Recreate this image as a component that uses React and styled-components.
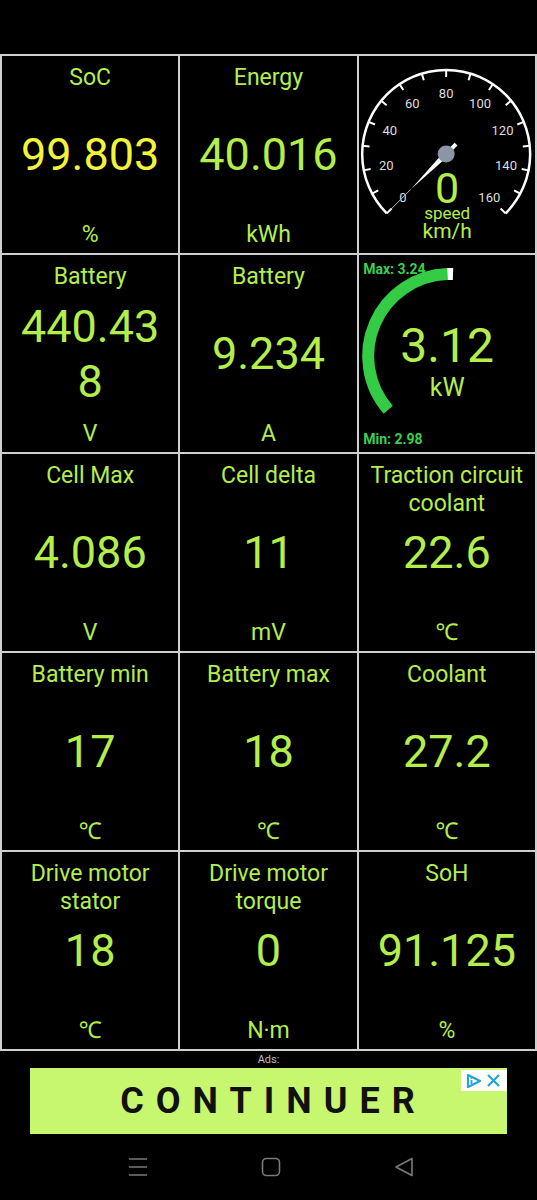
import React from 'react'
import styled, { createGlobalStyle } from 'styled-components'

const GREEN = '#b4ee4a'
const YELLOW = '#f3f33a'
const GAUGE = '#33cc44'

const GlobalStyle = createGlobalStyle`
  body {
    margin: 0;
    background: #000;
    font-family: Roboto, 'Noto Sans', sans-serif;
  }
`

const Page = styled.div`
  width: 537px;
  height: 1200px;
  display: flex;
  flex-direction: column;
  background: #000;
  overflow: hidden;
`
const StatusBar = styled.div`
  height: 54px;
  flex-shrink: 0;
`
const Grid = styled.div`
  display: grid;
  grid-template-columns: repeat(3, 1fr);
  grid-auto-rows: 197px;
  gap: 2px;
  padding: 2px;
  background: #cfcfcf;
`
const Cell = styled.div`
  background: #000;
  display: grid;
  grid-template-areas: 'c';
  min-width: 0;
  overflow: hidden;
  color: ${GREEN};
  text-align: center;
  & > * {
    grid-area: c;
  }
`
const Label = styled.div`
  align-self: start;
  padding: 8px 8px 0;
  font-size: 23px;
  line-height: 28px;
`
const Value = styled.div`
  align-self: center;
  padding: 0 8px;
  font-size: 45px;
  line-height: 55px;
  word-break: break-all;
  color: ${p => p.$color || GREEN};
`
const Unit = styled.div`
  align-self: end;
  padding: 0 8px 4px;
  font-size: 23px;
  line-height: 28px;
`
const GaugeSvg = styled.svg`
  width: 100%;
  height: 100%;
  display: block;
  font-family: Roboto, sans-serif;
`
const AdLabel = styled.div`
  height: 17px;
  line-height: 17px;
  text-align: center;
  font-size: 11px;
  color: #bdbdbd;
`
const Banner = styled.div`
  position: relative;
  margin: 0 30px;
  height: 66px;
  background: #c6f76e;
  display: flex;
  align-items: center;
  justify-content: center;
`
const BannerText = styled.span`
  font-size: 36px;
  font-weight: 700;
  letter-spacing: 12px;
  padding-left: 10px;
  color: #111;
`
const AdChoices = styled.div`
  position: absolute;
  top: 2px;
  right: 0;
  width: 46px;
  height: 21px;
  background: #fff;
  display: flex;
  align-items: center;
  justify-content: center;
`
const NavBar = styled.nav`
  flex: 1;
  display: flex;
  align-items: center;
  justify-content: center;
  gap: 113px;
  padding-left: 4px;
`
const NavIcon = styled.svg`
  width: 20px;
  height: 20px;
  stroke: #7a7a7a;
  fill: none;
  stroke-width: 1.6;
`

const polar = (cx, cy, r, deg) => {
  const a = (deg * Math.PI) / 180
  return [cx + r * Math.cos(a), cy - r * Math.sin(a)]
}

const SpeedGauge = () => {
  const cx = 87
  const cy = 98
  const r = 84
  const ang = v => 225 - (v / 160) * 270
  const [sx, sy] = polar(cx, cy, r, 225)
  const [ex, ey] = polar(cx, cy, r, -45)
  const ticks = []
  for (let v = 0; v <= 160; v += 10) ticks.push(v)
  const nums = [0, 20, 40, 60, 80, 100, 120, 140, 160]
  const a0 = ang(0)
  const perp = a0 + 90
  const [tx, ty] = polar(cx, cy, 50, a0)
  const [lx, ly] = polar(cx, cy, 79, a0)
  const [b1x, b1y] = polar(cx, cy, 3, perp)
  const [b2x, b2y] = polar(cx, cy, -3, perp)
  const [t1x, t1y] = polar(cx, cy, 14, a0 + 180)
  const [w1x, w1y] = polar(t1x, t1y, 2, perp)
  const [w2x, w2y] = polar(t1x, t1y, -2, perp)
  const [c1x, c1y] = polar(cx, cy, 2, perp)
  const [c2x, c2y] = polar(cx, cy, -2, perp)
  return (
    <GaugeSvg viewBox="0 0 176 197">
      <path
        d={`M${sx} ${sy} A${r} ${r} 0 1 1 ${ex} ${ey}`}
        stroke="#fff"
        strokeWidth="2.5"
        fill="none"
      />
      {ticks.map(v => {
        const [x1, y1] = polar(cx, cy, r, ang(v))
        const [x2, y2] = polar(cx, cy, r - 7, ang(v))
        return <line key={v} x1={x1} y1={y1} x2={x2} y2={y2} stroke="#fff" strokeWidth="2" />
      })}
      {nums.map(v => {
        const [x, y] = polar(cx, cy, 61, ang(v))
        return (
          <text key={v} x={x} y={y} fill="#dedede" fontSize="13" textAnchor="middle" dominantBaseline="central">
            {v}
          </text>
        )
      })}
      <line x1={tx} y1={ty} x2={lx} y2={ly} stroke="#bbb" strokeWidth="1" />
      <polygon points={`${tx},${ty} ${b1x},${b1y} ${b2x},${b2y}`} fill="#fff" />
      <polygon points={`${c1x},${c1y} ${w1x},${w1y} ${w2x},${w2y} ${c2x},${c2y}`} fill="#fff" />
      <circle cx={cx} cy={cy} r="8.5" fill="#8a96a4" />
      <text x="88" y="147" fill={GREEN} fontSize="43" textAnchor="middle">0</text>
      <text x="88" y="163" fill={GREEN} fontSize="17" textAnchor="middle">speed</text>
      <text x="88" y="182" fill={GREEN} fontSize="21" textAnchor="middle">km/h</text>
    </GaugeSvg>
  )
}

const PowerGauge = () => {
  const cx = 91
  const cy = 101
  const r = 82
  const [sx, sy] = polar(cx, cy, r, 221)
  const [mx, my] = polar(cx, cy, r, 92)
  const [ex, ey] = polar(cx, cy, r, 88)
  return (
    <GaugeSvg viewBox="0 0 176 197">
      <text x="4" y="19" fill="#3ccf4e" fontSize="14" fontWeight="700">Max: 3.24</text>
      <text x="4" y="189" fill="#3ccf4e" fontSize="14" fontWeight="700">Min: 2.98</text>
      <path d={`M${sx} ${sy} A${r} ${r} 0 0 1 ${mx} ${my}`} stroke={GAUGE} strokeWidth="12" fill="none" />
      <path d={`M${mx} ${my} A${r} ${r} 0 0 1 ${ex} ${ey}`} stroke="#fff" strokeWidth="12" fill="none" />
      <text x="88" y="107" fill={GREEN} fontSize="48" textAnchor="middle">3.12</text>
      <text x="88" y="141" fill={GREEN} fontSize="25" textAnchor="middle">kW</text>
    </GaugeSvg>
  )
}

const cells = [
  { label: 'SoC', value: '99.803', unit: '%', color: YELLOW },
  { label: 'Energy', value: '40.016', unit: 'kWh' },
  { gauge: 'speed' },
  { label: 'Battery', value: '440.438', unit: 'V' },
  { label: 'Battery', value: '9.234', unit: 'A' },
  { gauge: 'power' },
  { label: 'Cell Max', value: '4.086', unit: 'V' },
  { label: 'Cell delta', value: '11', unit: 'mV' },
  { label: 'Traction circuit coolant', value: '22.6', unit: '℃' },
  { label: 'Battery min', value: '17', unit: '℃' },
  { label: 'Battery max', value: '18', unit: '℃' },
  { label: 'Coolant', value: '27.2', unit: '℃' },
  { label: 'Drive motor stator', value: '18', unit: '℃' },
  { label: 'Drive motor torque', value: '0', unit: 'N·m' },
  { label: 'SoH', value: '91.125', unit: '%' },
]

const App = () => {
  return (
    <Page>
      <GlobalStyle />
      <StatusBar />
      <Grid>
        {cells.map((c, i) => (
          <Cell key={i}>
            {c.gauge === 'speed' && <SpeedGauge />}
            {c.gauge === 'power' && <PowerGauge />}
            {!c.gauge && (
              <>
                <Label>{c.label}</Label>
                <Value $color={c.color}>{c.value}</Value>
                <Unit>{c.unit}</Unit>
              </>
            )}
          </Cell>
        ))}
      </Grid>
      <AdLabel>Ads:</AdLabel>
      <Banner>
        <BannerText>CONTINUER</BannerText>
        <AdChoices>
          <svg width="40" height="18" viewBox="0 0 40 18">
            <path d="M4 3 L16 9 L4 15 Z" fill="none" stroke="#26a4d8" strokeWidth="2.2" strokeLinejoin="round" />
            <line x1="7.5" y1="8" x2="7.5" y2="12" stroke="#26a4d8" strokeWidth="1.8" />
            <circle cx="7.5" cy="6" r="1" fill="#26a4d8" />
            <path d="M24 3 L35 14 M35 3 L24 14" stroke="#26a4d8" strokeWidth="2.2" />
          </svg>
        </AdChoices>
      </Banner>
      <NavBar>
        <NavIcon viewBox="0 0 20 20">
          <path d="M1 2 H19 M1 10 H19 M1 18 H19" />
        </NavIcon>
        <NavIcon viewBox="0 0 20 20">
          <rect x="1.5" y="1.5" width="17" height="17" rx="4" />
        </NavIcon>
        <NavIcon viewBox="0 0 20 20">
          <path d="M18 1.5 L2 10 L18 18.5 Z" strokeLinejoin="round" />
        </NavIcon>
      </NavBar>
    </Page>
  )
}

export default App
